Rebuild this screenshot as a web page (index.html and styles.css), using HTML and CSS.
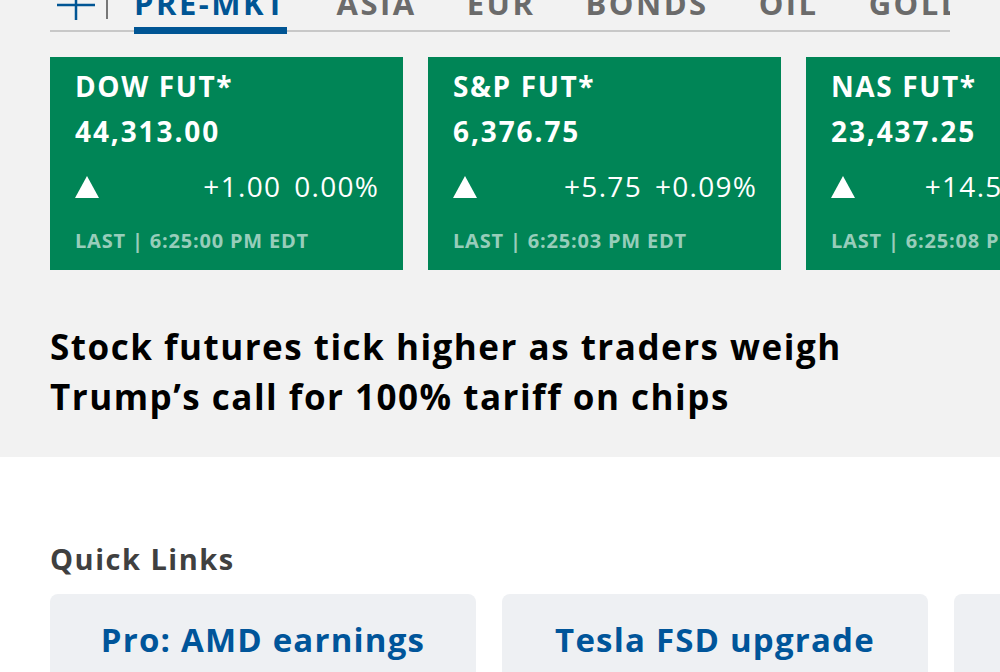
FILE: index.html
```html
<!DOCTYPE html>
<html lang="en">
<head>
  <meta charset="UTF-8" />
  <meta name="viewport" content="width=device-width, initial-scale=1" />
  <title>Markets</title>
  <link rel="stylesheet" href="styles.css">
</head>
<body>
  <section class="markets">
    <nav class="tabs">
      <svg class="tab-plus" width="38" height="32" viewBox="0 0 38 32">
        <path d="M19 0V32M0 17H38" stroke="#005594" stroke-width="2.5" fill="none" />
      </svg>
      <span class="tab-sep"></span>
      <a class="tab active">PRE-MKT</a>
      <a class="tab">ASIA</a>
      <a class="tab">EUR</a>
      <a class="tab">BONDS</a>
      <a class="tab">OIL</a>
      <a class="tab">GOLD</a>
      <a class="tab">CRYPTO</a>
    </nav>

    <div class="quotes">
      <div class="quote">
        <div class="quote-name">DOW FUT*</div>
        <div class="quote-price">44,313.00</div>
        <div class="quote-change">
          <span class="arrow"></span>
          <span class="change-vals"><span>+1.00</span><span>0.00%</span></span>
        </div>
        <div class="quote-time">LAST | 6:25:00 PM EDT</div>
      </div>
      <div class="quote">
        <div class="quote-name">S&amp;P FUT*</div>
        <div class="quote-price">6,376.75</div>
        <div class="quote-change">
          <span class="arrow"></span>
          <span class="change-vals"><span>+5.75</span><span>+0.09%</span></span>
        </div>
        <div class="quote-time">LAST | 6:25:03 PM EDT</div>
      </div>
      <div class="quote">
        <div class="quote-name">NAS FUT*</div>
        <div class="quote-price">23,437.25</div>
        <div class="quote-change">
          <span class="arrow"></span>
          <span class="change-vals"><span>+14.50</span><span>+0.06%</span></span>
        </div>
        <div class="quote-time">LAST | 6:25:08 PM EDT</div>
      </div>
    </div>

    <h1 class="headline">Stock futures tick higher as traders weigh Trump’s call for 100% tariff on chips</h1>
  </section>

  <section class="quick">
    <h2 class="quick-title">Quick Links</h2>
    <div class="quick-row">
      <a class="quick-card">Pro: AMD earnings</a>
      <a class="quick-card">Tesla FSD upgrade</a>
      <a class="quick-card">Fed rate outlook</a>
    </div>
  </section>
</body>
</html>
```

FILE: styles.css
```css
* {
  box-sizing: border-box;
}
body {
  margin: 0;
  font-family: 'Open Sans', Lato, sans-serif;
  background: #fff;
  overflow: hidden;
  height: 672px;
}

/* top market area */
.markets {
  background: #f2f2f2;
  padding: 0 0 35px 50px;
  overflow: hidden;
}
.tabs {
  display: flex;
  align-items: flex-end;
  width: 900px;
  margin-top: -12px;
  overflow: hidden;
  white-space: nowrap;
  background: linear-gradient(#c8c8c8, #c8c8c8) 0 calc(100% - 2px) / 100% 2px no-repeat;
}
.tab-plus {
  flex-shrink: 0;
  align-self: flex-start;
  margin-left: 7px;
}
.tab-sep {
  flex-shrink: 0;
  align-self: flex-start;
  width: 2px;
  height: 31px;
  background: #777;
  margin: 0 26px 0 11px;
}
.tab {
  flex-shrink: 0;
  font-size: 31px;
  font-weight: 700;
  letter-spacing: 2.5px;
  line-height: 30px;
  color: #6b6b6b;
  padding-bottom: 9px;
  border-bottom: 7px solid transparent;
  margin-right: 50px;
}
.tab.active {
  color: #005594;
  border-bottom-color: #005594;
}

.quotes {
  display: flex;
  gap: 25px;
  margin-top: 23px;
}
.quote {
  flex-shrink: 0;
  width: 353px;
  height: 213px;
  background: #008556;
  color: #fff;
  padding: 12px 25px 0;
}
.quote-name,
.quote-price {
  font-size: 28px;
  font-weight: 700;
  line-height: 34px;
  letter-spacing: 1.6px;
}
.quote-price {
  margin-top: 11px;
  letter-spacing: 1.9px;
}
.quote-change {
  display: flex;
  justify-content: space-between;
  align-items: center;
  margin-top: 21px;
  font-size: 28px;
  font-weight: 500;
  line-height: 34px;
  letter-spacing: 1.3px;
}
.arrow {
  width: 0;
  height: 0;
  border-left: 12.5px solid transparent;
  border-right: 12.5px solid transparent;
  border-bottom: 22px solid #fff;
  margin-top: 1px;
}
.change-vals {
  display: flex;
  gap: 13px;
  margin-right: -1.3px;
}
.quote-time {
  margin-top: 26px;
  font-size: 20px;
  font-weight: 700;
  line-height: 24px;
  letter-spacing: 0.8px;
  color: rgba(255, 255, 255, 0.6);
}

.headline {
  margin: 52px 0 0;
  max-width: 880px;
  font-size: 35px;
  font-weight: 700;
  line-height: 50px;
  letter-spacing: 1.5px;
  color: #000;
}

/* quick links */
.quick {
  padding: 0 0 0 50px;
}
.quick-title {
  margin: 84px 0 0;
  font-size: 29px;
  font-weight: 700;
  line-height: 36px;
  letter-spacing: 1.5px;
  color: #404040;
}
.quick-row {
  display: flex;
  gap: 26px;
  margin-top: 17px;
}
.quick-card {
  flex-shrink: 0;
  width: 426px;
  height: 110px;
  background: #eef0f3;
  border-radius: 8px;
  padding-top: 26px;
  text-align: center;
  font-size: 33px;
  font-weight: 700;
  line-height: 40px;
  letter-spacing: 1.2px;
  color: #00559a;
}
```
